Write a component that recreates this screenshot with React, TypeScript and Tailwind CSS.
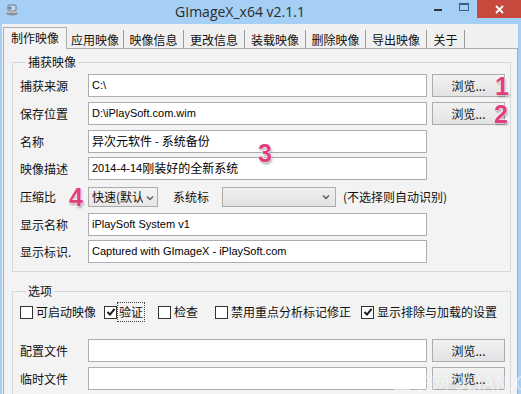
import React from "react";

const F = "font-['Liberation_Sans','Noto_Sans_CJK_SC',sans-serif]";
const C = "font-['Noto_Sans_CJK_SC',sans-serif]";

function Btn() {
  return (
    <div className={`ml-[5px] w-[73px] h-[23px] border border-[#acacac] bg-linear-to-b from-[#f2f2f2] to-[#e3e3e3] flex items-center justify-center text-[12px] text-[#111] ${C}`}>
      浏览...
    </div>
  );
}

function Input({ children }: { children?: React.ReactNode }) {
  return (
    <div className={`h-[23px] w-[339px] border border-[#abadb3] bg-white flex items-center pl-[3px] text-[11px] text-black whitespace-nowrap overflow-hidden ${F}`}>
      {children}
    </div>
  );
}

function Label({ children }: { children: React.ReactNode }) {
  return <div className={`w-[68px] shrink-0 text-[12px] text-[#111] ${C}`}>{children}</div>;
}

function Chevron() {
  return (
    <svg width="8" height="6" viewBox="0 0 8 6">
      <path d="M1 1.5 L4 4.5 L7 1.5" stroke="#555" strokeWidth="1.3" fill="none" />
    </svg>
  );
}

function CB({ checked }: { checked?: boolean }) {
  return (
    <div className="w-[13px] h-[13px] shrink-0 border border-[#333] bg-white flex items-center justify-center">
      {checked && (
        <svg width="10" height="10" viewBox="0 0 10 10">
          <path d="M1.5 5 L4 7.6 L8.6 1.8" stroke="#1a1a1a" strokeWidth="2" fill="none" />
        </svg>
      )}
    </div>
  );
}

const Z = "font-['Liberation_Sans',sans-serif] font-bold text-[#e23d7e] text-[25px] leading-none [text-shadow:0_0_2px_#fff,0_0_2px_#fff,1px_2px_2px_rgba(0,0,0,0.35)]";

export default function App() {
  const tabs: [string, string][] = [
    ["应用映像", "w-[57px]"],
    ["映像信息", "w-[60px]"],
    ["更改信息", "w-[61px]"],
    ["装载映像", "w-[61px]"],
    ["删除映像", "w-[60px]"],
    ["导出映像", "w-[61px]"],
    ["关于", "w-[38px]"],
  ];
  return (
    <div className={`relative w-[521px] h-[394px] overflow-hidden bg-[#a5cff4] ${C}`}>
      {/* title bar */}
      <div className="h-[24px] flex items-start">
        <div className="w-[19px] h-[24px] flex items-start pl-[5px] pt-[3px]">
          <svg width="14" height="14" viewBox="0 0 14 14">
            <ellipse cx="7" cy="10" rx="6" ry="2.5" fill="#8a9099" />
            <rect x="3" y="2" width="8" height="6" rx="1" fill="#c9d3dc" stroke="#5d6670" strokeWidth="0.8" />
            <circle cx="5" cy="5" r="1.5" fill="#3d86d0" />
            <path d="M2 9 L12 9" stroke="#e9eef3" strokeWidth="1" />
          </svg>
        </div>
        <div className={`flex-1 pl-[36px] text-center text-[14px] leading-[24px] text-[#2b2b2b] font-['Open_Sans',sans-serif]`}>
          GImageX_x64 v2.1.1
        </div>
        <div className="flex items-start">
          <div className="w-[25px] h-[16px] flex items-center justify-center">
            <div className="w-[8px] h-[2px] bg-[#333] mt-[3px]" />
          </div>
          <div className="w-[27px] h-[16px] flex items-center justify-center">
            <div className="w-[10px] h-[8px] border border-[#3c5f86] border-t-2 -mt-[3px]" />
          </div>
          <div className="w-[44px] h-[18px] bg-[#c84a3f] flex items-center justify-center">
            <svg width="9" height="9" viewBox="0 0 9 9">
              <path d="M1 1 L8 8 M8 1 L1 8" stroke="#fff" strokeWidth="1.8" />
            </svg>
          </div>
        </div>
      </div>

      {/* body */}
      <div className="ml-[2px] mr-[3px] h-[370px] bg-[#f0f0f0] pt-[3px]">
        {/* tabs */}
        <div className="flex items-end h-[22px] ml-[1px] relative z-10">
          <div className="w-[64px] h-[22px] border-l border-t border-r border-[#adadad] bg-[#f3f3f3] flex items-center justify-center text-[12px] text-[#111] pb-[1px]">
            制作映像
          </div>
          {tabs.map(([t, w]) => (
            <div key={t} className={`${w} h-[19px] border-r border-[#9a9a9a] flex items-center justify-center text-[12px] text-[#111]`}>
              {t}
            </div>
          ))}
        </div>
        {/* pane */}
        <div className="ml-[1px] w-[515px] h-[349px] -mt-[1px] border-l border-r border-t border-[#adadad] bg-[#f3f3f3] pl-[8px]">
          {/* group 1 */}
          <fieldset className="mt-[5px] w-[499px] border border-[#d5d9dc] pl-[7px] pt-[4px] pb-[8px]">
            <legend className="ml-[6px] px-[2px] text-[12px] leading-[16px] text-[#111]">捕获映像</legend>
            <div className="flex items-center">
              <Label>捕获来源</Label>
              <Input>C:\</Input>
              <Btn />
            </div>
            <div className="flex items-center mt-[5px]">
              <Label>保存位置</Label>
              <Input>D:\iPlaySoft.com.wim</Input>
              <Btn />
            </div>
            <div className="flex items-center mt-[5px]">
              <Label>名称</Label>
              <Input>
                <span className="text-[12px]">异次元软件</span>&nbsp;-&nbsp;<span className="text-[12px]">系统备份</span>
              </Input>
            </div>
            <div className="flex items-center mt-[4px]">
              <Label>映像描述</Label>
              <Input>
                2014-4-14<span className="text-[12px]">刚装好的全新系统</span>
              </Input>
            </div>
            <div className="flex items-center mt-[7px]">
              <Label>压缩比</Label>
              <div className="w-[70px] h-[20px] border border-[#acacac] bg-linear-to-b from-[#f4f4f4] to-[#e6e6e6] flex items-center">
                <div className="w-[54px] overflow-hidden whitespace-nowrap pl-[3px] text-[12px] text-[#111]">快速(默认)</div>
                <div className="flex-1 flex justify-center pt-[1px]"><Chevron /></div>
              </div>
              <div className="ml-[15px] w-[49px] text-[12px] text-[#111]">系统标</div>
              <div className="w-[114px] h-[20px] border border-[#acacac] bg-linear-to-b from-[#efefef] to-[#e2e2e2] flex items-center justify-end pr-[5px]">
                <Chevron />
              </div>
              <div className="ml-[7px] text-[12px] text-[#111]">(不选择则自动识别)</div>
            </div>
            <div className="flex items-center mt-[6px]">
              <Label>显示名称</Label>
              <Input>iPlaySoft System v1</Input>
            </div>
            <div className="flex items-center mt-[4px]">
              <Label>显示标识.</Label>
              <Input>Captured with GImageX - iPlaySoft.com</Input>
            </div>
          </fieldset>

          {/* group 2 */}
          <fieldset className="mt-[11px] w-[499px] border border-[#d5d9dc] pl-[7px] pt-[5px] pb-[8px]">
            <legend className="ml-[6px] px-[2px] text-[12px] leading-[16px] text-[#111]">选项</legend>
            <div className="flex items-center h-[16px] text-[12px] text-[#111]">
              <CB />
              <span className="ml-[3px]">可启动映像</span>
              <div className="ml-[8px]"><CB checked /></div>
              <span className="ml-[1px] px-[1px] outline outline-1 outline-dotted outline-[#444]">验证</span>
              <div className="ml-[14px]"><CB /></div>
              <span className="ml-[3px]">检查</span>
              <div className="ml-[17px]"><CB /></div>
              <span className="ml-[3px]">禁用重点分析标记修正</span>
              <div className="ml-[10px]"><CB checked /></div>
              <span className="ml-[3px]">显示排除与加载的设置</span>
            </div>
            <div className="flex items-center mt-[19px]">
              <Label>配置文件</Label>
              <Input />
              <Btn />
            </div>
            <div className="flex items-center mt-[5px]">
              <Label>临时文件</Label>
              <Input />
              <Btn />
            </div>
          </fieldset>
        </div>
      </div>

      {/* annotation overlays */}
      <div className={`absolute left-[495px] top-[74px] ${Z}`}>1</div>
      <div className={`absolute left-[494px] top-[102px] ${Z}`}>2</div>
      <div className={`absolute left-[258px] top-[141px] ${Z}`}>3</div>
      <div className={`absolute left-[69px] top-[185px] ${Z}`}>4</div>

      {/* watermark */}
      <div className="absolute left-[393px] top-[369px] text-[18px] text-white/50 font-['Noto_Sans_CJK_SC',sans-serif] tracking-[1px] whitespace-nowrap pointer-events-none">
        三联网 3LIAN.COM
      </div>
    </div>
  );
}
